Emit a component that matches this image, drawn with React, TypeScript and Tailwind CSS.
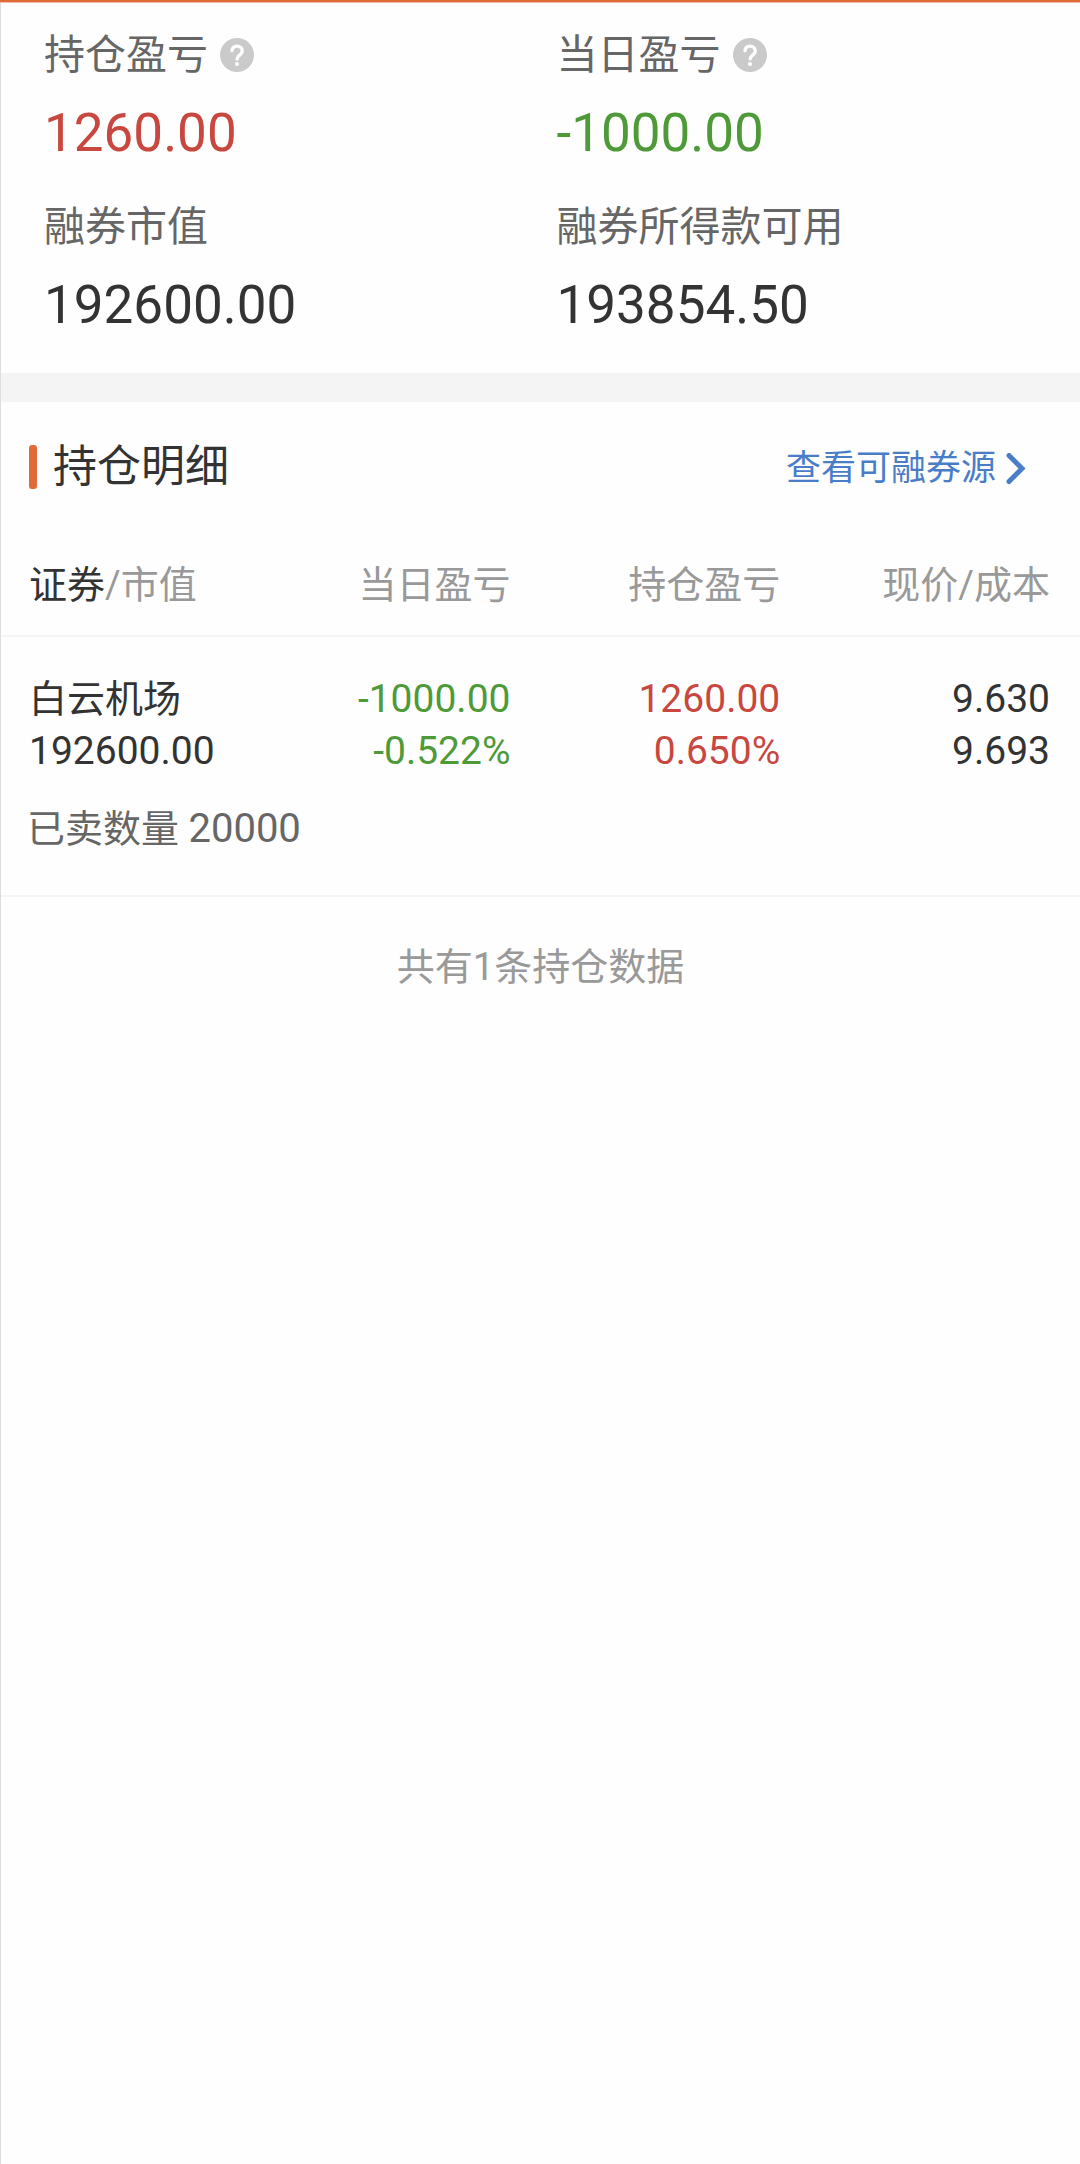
import React from 'react';

interface SummaryItem {
  label: string;
  value: string;
  color: string;
  help?: boolean;
}

interface Position {
  name: string;
  marketValue: string;
  dayProfit: string;
  dayRate: string;
  holdProfit: string;
  holdRate: string;
  price: string;
  cost: string;
  sold: number;
}

const UP = 'text-[#c8473f]';
const DOWN = 'text-[#4f9a38]';

const summary: SummaryItem[] = [
  { label: '持仓盈亏', value: '1260.00', color: UP, help: true },
  { label: '当日盈亏', value: '-1000.00', color: DOWN, help: true },
  { label: '融券市值', value: '192600.00', color: 'text-[#333333]' },
  { label: '融券所得款可用', value: '193854.50', color: 'text-[#333333]' },
];

const positions: Position[] = [
  {
    name: '白云机场',
    marketValue: '192600.00',
    dayProfit: '-1000.00',
    dayRate: '-0.522%',
    holdProfit: '1260.00',
    holdRate: '0.650%',
    price: '9.630',
    cost: '9.693',
    sold: 20000,
  },
];

const profitColor = (value: string) => (value.startsWith('-') ? DOWN : UP);

const HelpButton: React.FC<{ label: string }> = ({ label }) => (
  <button type="button" aria-label={`${label}说明`} className="shrink-0">
    <svg className="block size-[34px]" viewBox="0 0 34 34" fill="none">
      <circle cx="17" cy="17" r="17" fill="#cacaca" />
      <path
        d="M12 12.6c.3-2.9 2.3-4.5 5.1-4.5 3 0 5.1 1.9 5.1 4.6 0 2.2-1.2 3.4-2.8 4.6-1.5 1.1-2.3 1.9-2.3 3.7"
        stroke="#fff"
        strokeWidth="3.4"
        strokeLinecap="round"
      />
      <circle cx="17" cy="26" r="2.1" fill="#fff" />
    </svg>
  </button>
);

const Summary: React.FC = () => (
  <section className="grid grid-cols-2 gap-x-8 gap-y-7 px-[43px] pt-[22px] pb-8">
    {summary.map(item => (
      <div key={item.label}>
        <div className="flex items-center gap-3 text-[41px] leading-[60px] text-[#666666]">
          <span className="whitespace-nowrap">{item.label}</span>
          {item.help && <HelpButton label={item.label} />}
        </div>
        <div className={`mt-3 text-[53px] leading-[72px] ${item.color}`}>{item.value}</div>
      </div>
    ))}
  </section>
);

const PositionTable: React.FC = () => (
  <table className="w-full table-fixed border-collapse">
    <thead>
      <tr className="border-b-2 border-[#f4f4f4] text-[38px] leading-[52px] whitespace-nowrap text-[#999999]">
        <th className="pb-6 pl-7 text-left font-normal">
          <span className="text-[#333333]">证券</span>/市值
        </th>
        <th className="pr-[30px] pb-6 text-right font-normal">当日盈亏</th>
        <th className="pr-[30px] pb-6 text-right font-normal">持仓盈亏</th>
        <th className="pr-[30px] pb-6 text-right font-normal">现价/成本</th>
      </tr>
    </thead>
    {positions.map(item => (
      <tbody key={item.name} className="border-b-2 border-[#f4f4f4] text-[39px] leading-[52px] whitespace-nowrap text-[#333333]">
        <tr>
          <td className="pt-9 pl-7">
            <div className="text-[38px]">{item.name}</div>
            <div>{item.marketValue}</div>
          </td>
          <td className={`pt-9 pr-[30px] text-right ${profitColor(item.dayProfit)}`}>
            <div>{item.dayProfit}</div>
            <div>{item.dayRate}</div>
          </td>
          <td className={`pt-9 pr-[30px] text-right ${profitColor(item.holdProfit)}`}>
            <div>{item.holdProfit}</div>
            <div>{item.holdRate}</div>
          </td>
          <td className="pt-9 pr-[30px] text-right">
            <div>{item.price}</div>
            <div>{item.cost}</div>
          </td>
        </tr>
        <tr>
          <td colSpan={4} className="pt-[26px] pb-10 pl-[26px] text-[38px] text-[#666666]">
            已卖数量 <span className="text-[40px]">{item.sold}</span>
          </td>
        </tr>
      </tbody>
    ))}
  </table>
);

const App: React.FC = () => (
  <div className="min-h-screen bg-[#fefefe] font-[Roboto,'Noto_Sans_CJK_SC',sans-serif]">
    <div className="h-[3px] border-b border-[#f2bfa8] bg-[#e06a3a]" />
    <main className="min-h-[calc(100vh-3px)] border-l border-[#dddddd]">
      <Summary />
      <div className="h-[29px] bg-[#f4f4f4]" />
      <section>
        <div className="flex items-center justify-between pt-[33px] pr-[54px] pb-[60px] pl-7">
          <h2 className="flex items-center gap-4 text-[44px] leading-[64px] text-[#333333]">
            <span className="h-[44px] w-2 rounded-[3px] bg-[#e06a3a]" />
            持仓明细
          </h2>
          <a href="#" className="flex items-center gap-[10px] pt-1 text-[35px] leading-[52px] text-[#4a7dc8]">
            查看可融券源
            <svg className="block h-8 w-5" viewBox="0 0 20 32" fill="none">
              <path d="M3 2.5L16 15.5L3 28.5" stroke="#4a7dc8" strokeWidth="5" strokeLinecap="round" strokeLinejoin="miter" />
            </svg>
          </a>
        </div>
        <PositionTable />
        <p className="pt-[44px] text-center text-[38px] leading-[52px] text-[#999999]">
          共有{positions.length}条持仓数据
        </p>
      </section>
    </main>
  </div>
);

export default App;
